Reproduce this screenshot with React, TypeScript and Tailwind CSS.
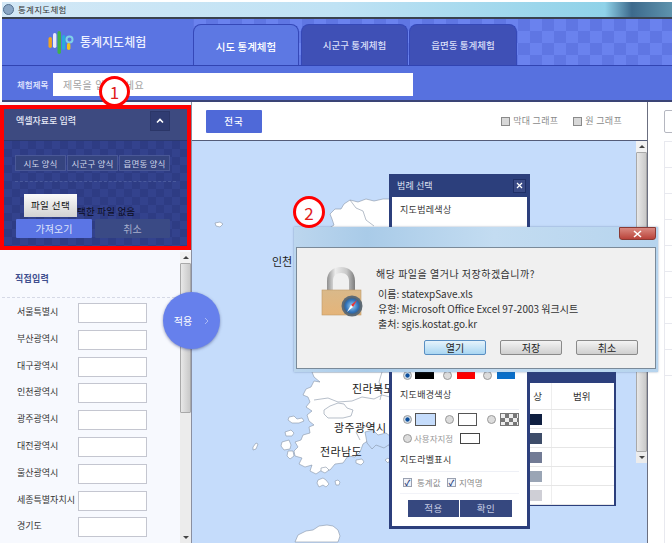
import React from "react";

const regions = ["서울특별시", "부산광역시", "대구광역시", "인천광역시", "광주광역시", "대전광역시", "울산광역시", "세종특별자치시", "경기도"];

function Logo() {
  return (
    <svg width="26" height="24" viewBox="0 0 26 24">
      <rect x="0.5" y="7" width="3.4" height="11" rx="1.7" fill="#f2a31f" />
      <rect x="5" y="3" width="3.4" height="15" rx="1.7" fill="#e9e9f8" />
      <rect x="9.5" y="1" width="3.4" height="23" rx="1.7" fill="#3fb24a" />
      <rect x="14" y="5" width="3.4" height="15" rx="1.7" fill="#29a9dd" />
      <circle cx="21.5" cy="9.5" r="3" fill="none" stroke="#7fd0e8" strokeWidth="2" />
      <rect x="19" y="13" width="3.4" height="7" rx="1.7" fill="#f2c21f" />
    </svg>
  );
}

function LockIcon() {
  return (
    <svg width="44" height="52" viewBox="0 0 44 52">
      <defs>
        <linearGradient id="shackle" x1="0" x2="1" y1="0" y2="0">
          <stop offset="0" stopColor="#8f8f8f" />
          <stop offset="0.3" stopColor="#ececec" />
          <stop offset="0.7" stopColor="#c8c8c8" />
          <stop offset="1" stopColor="#7c7c7c" />
        </linearGradient>
        <linearGradient id="body" x1="0" x2="0" y1="0" y2="1">
          <stop offset="0" stopColor="#d9b98a" />
          <stop offset="1" stopColor="#e5b479" />
        </linearGradient>
        <radialGradient id="globe">
          <stop offset="0" stopColor="#9fd2f2" />
          <stop offset="0.75" stopColor="#2d6fb8" />
          <stop offset="1" stopColor="#50606f" />
        </radialGradient>
      </defs>
      <path d="M7 26V15C7 6 13 1 21 1s14 5 14 14v11h-6V15c0-5-3-8-8-8s-8 3-8 8v11z" fill="url(#shackle)" />
      <rect x="2" y="24" width="39" height="25" fill="url(#body)" stroke="#c09a68" strokeWidth="0.6" />
      <circle cx="32" cy="40" r="10.5" fill="#5f6b75" />
      <circle cx="32" cy="40" r="8.5" fill="url(#globe)" />
      <path d="M37 34l-4 7-2-2z" fill="#e33" />
      <path d="M27 46l4-7 2 2z" fill="#fff" />
    </svg>
  );
}

function MapLand() {
  const land = "#ffffff";
  const line = "#8793a6";
  return (
    <svg className="absolute left-0 top-0" width="445" height="402" viewBox="192 141 445 402">
      <g fill={land} stroke={line} strokeWidth="0.6">
        <path d="M330 214l5-5 6 0 3-5 6-4 8 2 8-3 8 2 9-2 10 0 0 40-68 0 3-10 6-4-2-6z" />
        <path d="M312 372l78 0 0 76-3-8-10 2-8-2-6 4-3 8-5 5-7-1-5 7-8 1-5 6-8 0-6 4-6-3 2-6-7 2-6-3 3-6-7-2-1-5 4-4-3-5 6-2 2-5 7-2-1-6 5-2-5-4-2-6 5-4-6-4 4-5-2-5-5-2 3-6 5-2 3-6 6 1-6-5-2-5 4-5z" />
        <path d="M295 542l3-7 8-4 7-1 6-4 8-1 6 1 5 4 2 6-2 6z" />
        <path d="M215 223l5-1 3 2-3 3-4-1z" />
        <path d="M253 447l3-4 2 1-2 5-3 1z" />
        <path d="M289 417l5-1 3 3 5-1 2 3-5 2-7 0-4-3z" />
        <path d="M285 432l6-2 3 3-2 3-6 0z" />
        <path d="M282 442l7-2 2 5-1 4-6 1-3-4z" />
        <path d="M288 451l5 0 1 5-4 3-3-3z" />
        <path d="M318 480l5-2 3 2 3 4-3 3-3-2-4 2-2-4z" />
        <path d="M335 481l3-1 2 2-1 3-3 0z" />
        <path d="M321 468l5-1 3 3-4 3-4-2z" />
        <path d="M385 460l3-2 2 2-2 3z" />
        <path d="M356 460l6-1 2 3-3 3-5-2z" />
      </g>
      <g fill={land} stroke={line} strokeWidth="0.6" strokeLinejoin="round">
        <path d="M324 410l6-4 8-3 6 1 3 4 6 2-2 6-8 2-8 0-7 0-4-4z" fill="#fdfdfd" />
        <path d="M350 200l6 8 7 3 3 9 8 6" fill="none" />
        <path d="M314 400l14-2 10 4 14-1 10-4 12 2 8-4 8 2" fill="none" />
        <path d="M382 372l-3 10 3 10-2 8" fill="none" />
        <path d="M360 440l-4-8 10-6 8 0" fill="none" />
      </g>
      <path d="M365 432l8-2 5 5 8-2 4 3 0 8-6 4-8-3-4 4-5-6z" fill="#c5dcfb" stroke={line} strokeWidth="0.6" />
    </svg>
  );
}

function Radio({ on, className = "" }: { on?: boolean; className?: string }) {
  return (
    <span
      className={`inline-block h-[9px] w-[9px] shrink-0 rounded-full border border-[#9a9a9a] ${
        on ? "bg-[radial-gradient(circle,#0d4f9c_35%,#cfdce8_50%)]" : "bg-[#dcdcdc]"
      } ${className}`}
    />
  );
}

function DialogButton({ children, active }: { children: React.ReactNode; active?: boolean }) {
  return (
    <div
      className={`flex h-[15px] w-[62px] items-center justify-center rounded-[2px] border text-[10px] text-[#222] ${
        active
          ? "border-[#5a8fc2] bg-gradient-to-b from-[#e6f3fb] to-[#a9d6f2]"
          : "border-[#8a8a8a] bg-gradient-to-b from-[#f4f4f4] to-[#cfcfcf]"
      }`}
    >
      {children}
    </div>
  );
}

function Scrollbar({ thumbHeight }: { thumbHeight: string }) {
  return (
    <div className="flex w-[11px] shrink-0 flex-col bg-[#ececec]">
      <div className="flex h-[11px] items-center justify-center bg-[#f2f2f2]">
        <div className="h-0 w-0 border-x-[3px] border-b-[3px] border-x-transparent border-b-[#444]" />
      </div>
      <div className={`${thumbHeight} rounded-[1px] border border-[#a9a9a9] bg-gradient-to-r from-[#e8e8e8] to-[#c9c9c9]`} />
      <div className="flex-1" />
      <div className="flex h-[11px] items-center justify-center">
        <div className="h-0 w-0 border-x-[3px] border-t-[3px] border-x-transparent border-t-[#444]" />
      </div>
    </div>
  );
}

export default function App() {
  return (
    <div
      className="relative h-[545px] w-[672px] overflow-hidden bg-white text-[#222]"
      style={{ fontFamily: '"Noto Sans CJK KR", "Liberation Sans", sans-serif' }}
    >
      <div className="flex h-[543px] flex-col pl-[2px] pt-[2px]">
        {/* title bar */}
        <div className="flex h-[15px] shrink-0 items-center gap-[4px] bg-[linear-gradient(90deg,#d3e8f6_0%,#bfe2f4_50%,#8fd2e8_90%,#3d6a8c_94%,#5e93ad_100%)] pl-[1px]">
          <div className="h-[11px] w-[11px] rounded-full border border-[#54708f] bg-[#8aa6c4]" />
          <span className="text-[8.5px] leading-none tracking-[0.3px] text-[#333]">통계지도체험</span>
        </div>
        <div className="h-[2px] shrink-0 bg-[#39424f]" />

        {/* header with tabs */}
        <div className="flex h-[47px] shrink-0 items-end border-b border-[#3144b2] bg-[#5f79e6] bg-[repeating-conic-gradient(#5f76e3_0%_25%,#6a82ee_0%_50%)] bg-[length:24px_24px]">
          <div className="flex h-full w-[191px] items-center bg-[#5a74e2] pl-[46px]">
            <Logo />
            <span className="ml-[6px] text-[12px] font-medium leading-none text-[#eef1ff]">통계지도체험</span>
          </div>
          <div className="flex h-[41px] w-[106px] items-center justify-center rounded-t-[8px] border border-b-0 border-[#3548b8] bg-[#5d78e3] pt-[4px] text-[10.5px] font-medium text-white">
            시도 통계체험
          </div>
          <div className="ml-[2px] flex h-[41px] w-[107px] items-center justify-center rounded-t-[8px] border border-b-0 border-[#3548b8] bg-[#3f50b6] text-[9.5px] font-medium text-[#d8def8]">
            시군구 통계체험
          </div>
          <div className="ml-[1px] flex h-[41px] w-[108px] items-center justify-center rounded-t-[8px] border border-b-0 border-[#3548b8] bg-[#3f50b6] text-[9.5px] font-medium text-[#d8def8]">
            읍면동 통계체험
          </div>
        </div>

        {/* title input row */}
        <div className="flex h-[36px] shrink-0 items-center border-b-2 border-[#3a4476] bg-[#5771df] pl-[15px] pt-[3px]">
          <span className="w-[36px] whitespace-nowrap text-[8.5px] font-medium leading-none text-[#e6eaff]">체험제목</span>
          <div className="flex h-[23px] w-[360px] items-center bg-white pl-[10px] text-[10px] tracking-[0.6px] text-[#a3a3a3]">
            제목을 입력하세요
          </div>
        </div>

        {/* body */}
        <div className="flex min-h-0 flex-1">
          {/* sidebar */}
          <div className="-ml-[2px] flex w-[191px] shrink-0 flex-col bg-[#f7f9fe]">
            <div className="mt-[3px] flex h-[145px] shrink-0 flex-col border-[4px] border-[#ff0000] bg-[#2f3e85]">
              <div className="flex h-[32px] shrink-0 items-center justify-between border-b border-[#2b386f] bg-[#3d4a80] pb-[7px] pl-[12px] pr-[17px]">
                <span className="text-[9px] font-medium text-[#e4e7f5]">엑셀자료로 입력</span>
                <div className="flex h-[20px] w-[20px] items-center justify-center border border-[#2b3668] bg-[#303c72]">
                  <svg width="8" height="6" viewBox="0 0 8 6">
                    <path d="M1 4.5L4 1.5 7 4.5" fill="none" stroke="#fff" strokeWidth="1.6" />
                  </svg>
                </div>
              </div>
              <div className="flex flex-1 flex-col bg-[repeating-conic-gradient(#2e3c84_0%_25%,#33428d_0%_50%)] bg-[length:16px_16px] px-[11px] pt-[14px]">
                <div className="flex gap-[1px] border-b border-dashed border-[#4a5a9c] pb-[10px]">
                  {["시도 양식", "시군구 양식", "읍면동 양식"].map((t) => (
                    <div
                      key={t}
                      className="flex h-[16px] w-[51px] items-center justify-center border border-[#4a5897] bg-[#35447f] text-[8.5px] tracking-[0.2px] text-[#cfd4ea]"
                    >
                      {t}
                    </div>
                  ))}
                </div>
                <div className="mt-[12px] flex h-[23px] items-end pl-[9px]">
                  <div className="flex h-[23px] w-[53px] shrink-0 items-center justify-center bg-gradient-to-b from-[#fbfbfb] to-[#d2d2d2] text-[9.5px] tracking-[0.4px] text-[#111]">
                    파일 선택
                  </div>
                  <span className="whitespace-nowrap text-[9.5px] leading-[12px] tracking-[0.2px] text-[#0d0d20]">택한 파일 없음</span>
                </div>
                <div className="ml-[1px] mt-[2px] flex gap-[3px]">
                  <div className="flex h-[19px] w-[76px] items-center justify-center rounded-[1px] bg-[#5b75e5] text-[10px] text-[#dfe4fb]">
                    가져오기
                  </div>
                  <div className="flex h-[19px] w-[75px] items-center justify-center rounded-[1px] bg-[#3a4a85] text-[10px] text-[#a9b0cd]">
                    취소
                  </div>
                </div>
              </div>
            </div>

            <div className="flex min-h-0 flex-1 pl-[2px] pt-[2px]">
              <div className="min-w-0 flex-1">
                <div className="flex h-[46px] items-center border-b border-dashed border-[#d5d9e6] pl-[13px] pt-[8px] text-[9px] font-bold tracking-[0.2px] text-[#3f4f8f]">
                  직접입력
                </div>
                <div className="flex flex-col pt-[5px]">
                  {regions.map((r) => (
                    <div key={r} className="flex h-[26.8px] items-start pl-[15px]">
                      <span className="w-[61px] whitespace-nowrap pt-[2px] text-[9px] leading-[14px] text-[#333]">{r}</span>
                      <div className="h-[20px] w-[69px] border border-[#c4c6d0] bg-white" />
                    </div>
                  ))}
                </div>
              </div>
              <Scrollbar thumbHeight="h-[150px]" />
            </div>
          </div>

          {/* center */}
          <div className="flex min-w-0 flex-1 flex-col border-l border-[#8a8fa0]">
            <div className="flex h-[39px] shrink-0 items-center justify-between border-b border-[#545c78] bg-white pl-[14px] pr-[25px]">
              <div className="flex h-[23px] w-[56px] items-center justify-center rounded-[1px] bg-[#4f69d8] text-[9.5px] font-medium tracking-[1px] text-white">
                전국
              </div>
              <div className="flex items-center text-[9px] tracking-[0.3px] text-[#8a8a8a]">
                <span className="mr-[3px] h-[9px] w-[9px] border border-[#8a8a8a] bg-[#d8d8d8]" />
                <span className="mr-[15px]">막대 그래프</span>
                <span className="mr-[3px] h-[9px] w-[9px] border border-[#8a8a8a] bg-[#d8d8d8]" />
                <span>원 그래프</span>
              </div>
            </div>
            <div className="relative flex min-h-0 flex-1 justify-end bg-[#c5dcfb]">
              <MapLand />
              <div className="relative">
                <Scrollbar thumbHeight="h-[300px]" />
              </div>
              <span className="absolute left-[80px] top-[115px] text-[11px] leading-none text-[#222]">인천</span>
              <span className="absolute left-[160px] top-[242px] text-[11px] leading-none tracking-[0.4px] text-[#222]">진라북도</span>
              <span className="absolute left-[142px] top-[281px] text-[11px] leading-none tracking-[0.4px] text-[#222]">광주광역시</span>
              <span className="absolute left-[128px] top-[305px] text-[11px] leading-none tracking-[0.4px] text-[#222]">전라남도</span>
            </div>
          </div>

          {/* right panel */}
          <div className="flex w-[25px] shrink-0 flex-col border-l border-[#6b6f80] bg-white pl-[16px]">
            <div className="mt-[8px] h-[23px] w-[12px] rounded-l-[2px] border border-[#b5b7c0]" />
            <div className="mt-[8px] flex flex-1 flex-col border-l border-[#e8e9ef]">
              {[0, 1, 2, 3, 4, 5, 6, 7, 8, 9].map((i) => (
                <div key={i} className="h-[26px] border-t border-[#e8e9ef]" />
              ))}
            </div>
          </div>
        </div>
      </div>

      {/* floating legend table (behind) */}
      <div className="absolute left-[500px] top-[372px] flex h-[134px] w-[116px] flex-col bg-[#2c3f7c] px-[2px] pb-[2px] pt-[11px]">
        <div className="flex-1 bg-white pl-[28px] text-[9.5px] text-[#333]">
          <div className="flex h-[27px] items-center border-b border-[#e6e6e6]">
            <span className="w-[12px] text-right">상</span>
            <span className="ml-[9px] flex h-full items-center border-l border-[#eeeeee] pl-[21px]">범위</span>
          </div>
          {["bg-[#0f1f40]", "bg-[#3e4d69]", "bg-[#727b95]", "bg-[#9aa5b5]", "bg-[#cfcfd6]"].map((c) => (
            <div key={c} className="flex h-[19px] items-center border-b border-[#e6e6e6]">
              <div className={`h-[11px] w-[12px] ${c}`} />
              <div className="ml-[9px] h-full border-l border-[#eeeeee]" />
            </div>
          ))}
        </div>
      </div>

      {/* floating legend selector */}
      <div className="absolute left-[389px] top-[174px] flex h-[355px] w-[141px] flex-col bg-[#2c3f7c] px-[3px] pb-[3px]">
        <div className="flex h-[23px] shrink-0 items-center justify-between pl-[5px] pr-[1px]">
          <span className="text-[9px] tracking-[0.1px] text-[#dfe3f3]">범례 선택</span>
          <div className="flex h-[14px] w-[13px] items-center justify-center border border-[#1f2f66] bg-[#3a4a85]">
            <svg width="7" height="7" viewBox="0 0 7 7">
              <path d="M1 1l5 5M6 1l-5 5" stroke="#fff" strokeWidth="1.2" />
            </svg>
          </div>
        </div>
        <div className="flex flex-1 flex-col bg-white px-[8px] text-[9px] tracking-[0.3px] text-[#333]">
          <div className="flex h-[25px] shrink-0 items-center">지도범레색상</div>
          <div className="h-[147px] shrink-0" />
          <div className="flex h-[12px] shrink-0 items-center pl-[3px]">
            <Radio on />
            <div className="ml-[3px] h-[8px] w-[19px] bg-black" />
            <Radio className="ml-[9px]" />
            <div className="ml-[5px] h-[8px] w-[18px] bg-[#ff0000]" />
            <Radio className="ml-[8px]" />
            <div className="ml-[5px] h-[8px] w-[18px] bg-[#0a6fc9]" />
          </div>
          <div className="flex h-[28px] shrink-0 items-center">지도배경색상</div>
          <div className="flex h-[19px] shrink-0 items-center border-t border-[#eef0f6] pl-[3px]">
            <Radio on />
            <div className="ml-[3px] h-[13px] w-[21px] border border-[#555] bg-[#c5dcfb]" />
            <Radio className="ml-[9px]" />
            <div className="ml-[4px] h-[13px] w-[19px] border border-[#555] bg-white" />
            <Radio className="ml-[10px]" />
            <div className="ml-[4px] h-[13px] w-[19px] border border-[#777] bg-[repeating-conic-gradient(#777_0%_25%,#eee_0%_50%)] bg-[length:8px_8px]" />
          </div>
          <div className="flex h-[20px] shrink-0 items-center pl-[3px] text-[8.5px] tracking-normal text-[#999]">
            <Radio />
            <span className="ml-[2px] w-[46px] whitespace-nowrap">사용자지정</span>
            <div className="h-[11px] w-[20px] border border-[#444] bg-white" />
          </div>
          <div className="flex h-[24px] shrink-0 items-center border-b border-[#eef0f6]">지도라벨표시</div>
          <div className="flex h-[22px] shrink-0 items-center border-b border-[#f2f3f8] pl-[3px] text-[8.5px] tracking-normal text-[#8a8a8a]">
            <span className="flex h-[9px] w-[9px] items-center justify-center border border-[#9aa0b0] bg-[#eef2fa] text-[8px] font-bold leading-none text-[#2c3f7c]">✓</span>
            <span className="ml-[5px] w-[30px]">통계값</span>
            <span className="flex h-[9px] w-[9px] items-center justify-center border border-[#9aa0b0] bg-[#eef2fa] text-[8px] font-bold leading-none text-[#2c3f7c]">✓</span>
            <span className="ml-[3px]">지역명</span>
          </div>
          <div className="flex shrink-0 gap-[1px] pl-[8px] pt-[6px]">
            <div className="flex h-[17px] w-[51px] items-center justify-center bg-[#36487f] text-[9.5px] tracking-[0.6px] text-[#c6cce4]">적용</div>
            <div className="flex h-[17px] w-[52px] items-center justify-center bg-[#36487f] text-[9.5px] tracking-[0.6px] text-[#c6cce4]">확인</div>
          </div>
        </div>
      </div>

      {/* apply circle */}
      <div className="absolute left-[163px] top-[292px] flex h-[57px] w-[57px] items-center justify-center gap-[12px] rounded-full bg-[#6680ec] text-[10px] text-white shadow-[0_1px_3px_rgba(40,50,110,0.5)]">
        <span>적용</span>
        <svg width="5" height="8" viewBox="0 0 5 8">
          <path d="M1 1l3 3-3 3" fill="none" stroke="#a9b8f4" strokeWidth="1" />
        </svg>
      </div>

      {/* download dialog */}
      <div className="absolute left-[294px] top-[227px] flex h-[145px] w-[364px] flex-col bg-[linear-gradient(90deg,#bcd6ee_0%,#a9cbe8_20%,#c3dcf1_55%,#b6d4ee_100%)] px-[2px] pb-[3px] shadow-[0_0_2px_rgba(60,90,130,0.5)]">
        <div className="flex h-[20px] shrink-0 justify-end">
          <div className="flex h-[13px] w-[37px] items-center justify-center rounded-b-[3px] border border-[#8a3a34] bg-gradient-to-b from-[#d98880] to-[#b9423a]">
            <svg width="9" height="8" viewBox="0 0 9 8">
              <path d="M1 1l7 6M8 1l-7 6" stroke="#fff" strokeWidth="1.6" />
            </svg>
          </div>
        </div>
        <div className="relative flex flex-1 border border-[#7a8a99] bg-[#f0f0f0]">
          <div className="pl-[23px] pt-[18px]">
            <LockIcon />
          </div>
          <div className="flex flex-col pl-[12px] pt-[18px] text-[10px] leading-[15px] text-[#333]">
            <div className="tracking-[0.5px]">해당 파일을 열거나 저장하겠습니까?</div>
            <div className="mt-[5px] pl-[2px]">이름: statexpSave.xls</div>
            <div className="pl-[2px]">유형: Microsoft Office Excel 97-2003 워크시트</div>
            <div className="pl-[2px]">출처: sgis.kostat.go.kr</div>
            <div className="mt-[9px] flex gap-[14px] pl-[48px]">
              <DialogButton active>열기</DialogButton>
              <DialogButton>저장</DialogButton>
              <DialogButton>취소</DialogButton>
            </div>
          </div>
        </div>
      </div>

      {/* callout numbers */}
      <div className="absolute left-[99px] top-[76px] flex h-[31px] w-[31px] items-center justify-center rounded-full border-[3px] border-[#ff0000] bg-white text-[17px] leading-none text-[#e0201c]">
        1
      </div>
      <div className="absolute left-[293px] top-[196px] flex h-[32px] w-[32px] items-center justify-center rounded-full border-[3px] border-[#ff0000] bg-white text-[17px] leading-none text-[#e0201c]">
        2
      </div>
    </div>
  );
}
